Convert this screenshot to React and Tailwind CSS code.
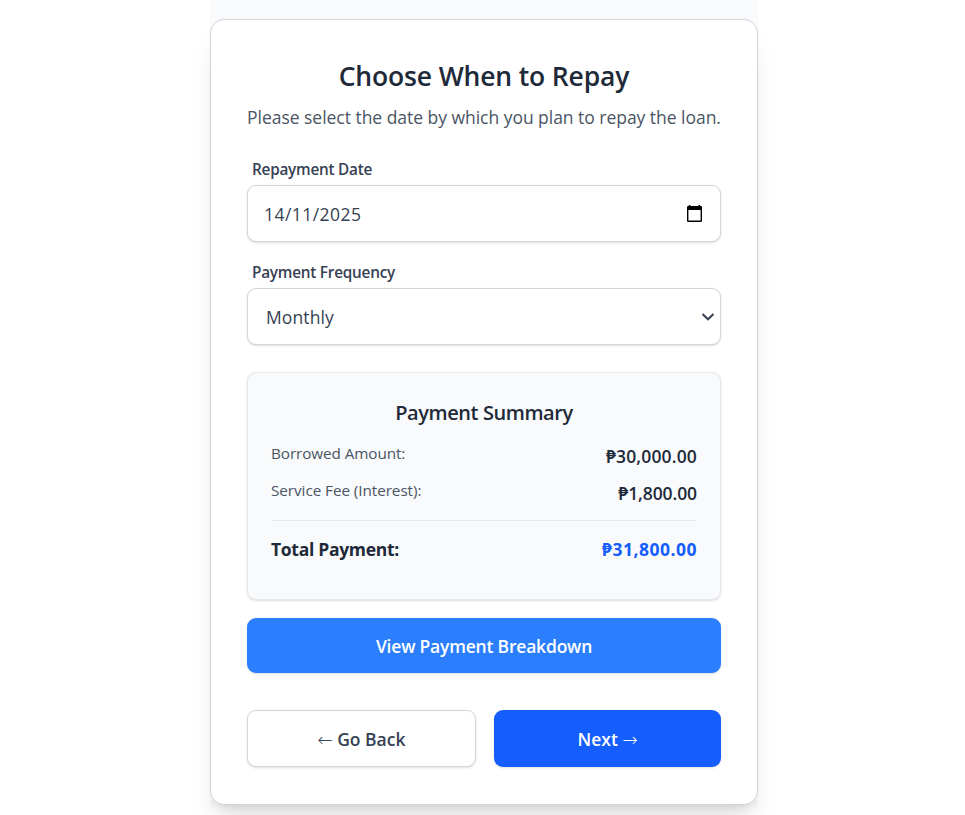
import React from "react";

function Field({ label, value, valueClass, children }) {
  return (
    <div>
      <div className="pl-[5px] text-[15.3px] leading-[22px] font-semibold text-gray-700">
        <span className="tracking-[-0.22px]">{label}</span>
      </div>
      <div className="mt-[5px] flex h-[57px] items-center justify-between rounded-[9px] border border-gray-300 bg-white shadow-sm">
        <span className={"pt-[2px] text-[17.5px] text-gray-700 " + valueClass}>{value}</span>
        {children}
      </div>
    </div>
  );
}

function SummaryRow({ label, labelClass, value, valueClass }) {
  return (
    <div className="flex h-[37px] justify-between">
      <span className={"text-[15.3px] leading-[22px] text-gray-600 " + labelClass}>{label}</span>
      <span className={"pt-[2px] text-[17.5px] leading-[24px] font-semibold text-gray-800 " + valueClass}>{value}</span>
    </div>
  );
}

function Arrow({ children }) {
  return <span className="font-['DejaVu_Sans',sans-serif] text-[18px] leading-none font-extralight">{children}</span>;
}

export default function App() {
  return (
    <div className="h-[815px] overflow-hidden bg-white font-['Open_Sans','Noto_Sans',sans-serif]">
      <main className="ml-[210px] h-[807px] w-[548px] bg-gray-50 pt-[19px]">
        <section className="h-[786px] rounded-[14px] border border-gray-300 bg-white px-9 pt-[36px] shadow-[0_22px_28px_-6px_rgb(0_0_0/0.1),0_9px_11px_-7px_rgb(0_0_0/0.1)]">
          <h1 className="text-center text-[26.5px] leading-[40px] font-semibold whitespace-nowrap text-gray-800">
            <span className="tracking-[-0.15px]">Choose When to Repay</span>
          </h1>
          <p className="mt-[8px] text-center text-[17.5px] leading-[27px] whitespace-nowrap text-gray-600">
            <span className="tracking-[-0.03px]">Please select the date by which you plan to repay the loan.</span>
          </p>

          <div className="mt-[27px] flex flex-col gap-[19px]">
            <Field label="Repayment Date" value="14/11/2025" valueClass="pl-4 tracking-[0.45px]">
              <svg className="mr-[17px] h-[17px] w-[18px]" viewBox="0 0 18 17" fill="black">
                <path d="M3.8 0h1.6v1h8.2V0h1.6v1h.5q1.3 0 1.3 1.3v13.4q0 1.3-1.3 1.3H3.3Q2 17 2 15.7V2.3Q2 1 3.3 1h.5zM3.4 5v10.5h12.2V5z" fillRule="evenodd" />
              </svg>
            </Field>
            <Field label="Payment Frequency" value="Monthly" valueClass="pl-[18px] tracking-[0.12px]">
              <svg className="mt-px mr-[5px] h-[8px] w-[14px] text-gray-700" viewBox="0 0 14 8" fill="none" stroke="currentColor" strokeWidth="2">
                <path d="M1.5 1l5.5 5.3L12.5 1" />
              </svg>
            </Field>
          </div>

          <div className="mt-[27px] h-[228px] rounded-[9px] border border-gray-200 bg-gray-50 px-[23px] pt-[25px] shadow-sm">
            <h2 className="text-center text-[20px] leading-[30px] font-semibold text-gray-800">
              <span className="tracking-[-0.42px]">Payment Summary</span>
            </h2>
            <div className="mt-[14px]">
              <SummaryRow label="Borrowed Amount:" labelClass="tracking-[-0.1px]" value="₱30,000.00" valueClass="tracking-[0.15px]" />
              <SummaryRow label="Service Fee (Interest):" labelClass="tracking-[-0.07px]" value="₱1,800.00" valueClass="tracking-[-0.1px]" />
            </div>
            <div className="mt-[4px] flex justify-between border-t border-gray-200 pt-[15px] text-[17.5px] leading-[27px] font-bold">
              <span className="tracking-[-0.3px] text-gray-800">Total Payment:</span>
              <span className="tracking-[0.5px] text-blue-600">₱31,800.00</span>
            </div>
          </div>

          <button className="mt-[18px] block h-[55px] w-full rounded-[9px] bg-blue-500 pt-[2px] text-[17.5px] font-semibold text-white shadow-sm">
            <span className="tracking-[-0.2px]">View Payment Breakdown</span>
          </button>

          <div className="mt-[37px] flex gap-[18px]">
            <button className="h-[57px] w-[229px] rounded-[9px] border border-gray-300 bg-white pt-[2px] text-[17.5px] font-semibold text-gray-700 shadow-sm">
              <Arrow>←</Arrow> Go Back
            </button>
            <button className="h-[57px] flex-1 rounded-[9px] bg-blue-600 pt-[2px] text-[17.5px] font-semibold text-white shadow-sm">
              Next <Arrow>→</Arrow>
            </button>
          </div>
        </section>
      </main>
    </div>
  );
}
